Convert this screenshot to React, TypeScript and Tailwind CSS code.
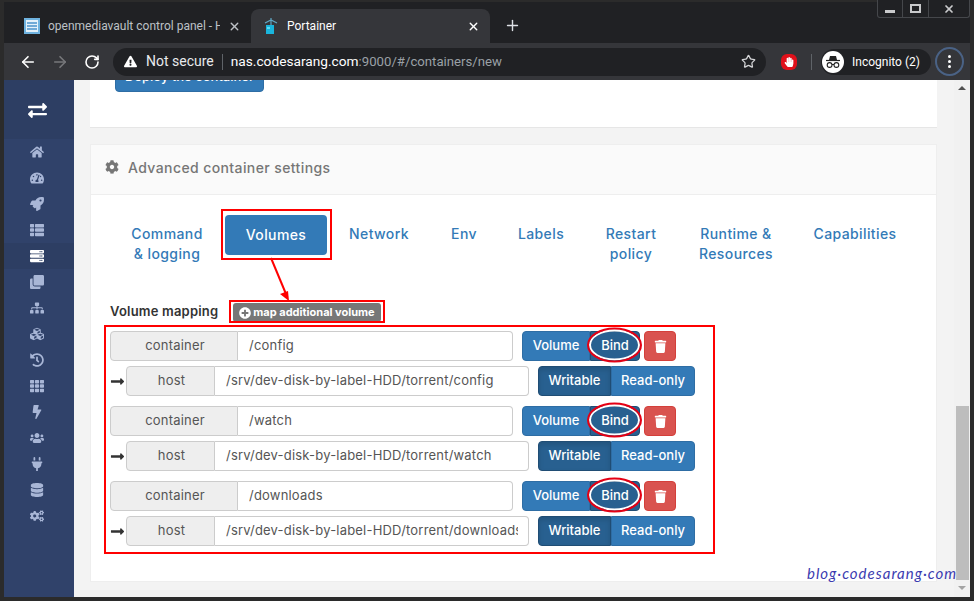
import { ArrowLeft, ArrowRight, Plus, RotateCw, Star, X } from "lucide-react";
import {
  FaBolt,
  FaClone,
  FaCog,
  FaCogs,
  FaCubes,
  FaDatabase,
  FaExchangeAlt,
  FaExclamationTriangle,
  FaHandPaper,
  FaHistory,
  FaHome,
  FaLongArrowAltRight,
  FaPlug,
  FaPlusCircle,
  FaRocket,
  FaServer,
  FaSitemap,
  FaTachometerAlt,
  FaTh,
  FaThList,
  FaTrash,
  FaUsers,
} from "react-icons/fa";

const NAV_ICONS = [
  FaHome,
  FaTachometerAlt,
  FaRocket,
  FaThList,
  FaServer,
  FaClone,
  FaSitemap,
  FaCubes,
  FaHistory,
  FaTh,
  FaBolt,
  FaUsers,
  FaPlug,
  FaDatabase,
  FaCogs,
];

const TABS = [
  { label: ["Command", "& logging"], width: "w-[116px]" },
  { label: ["Volumes"], width: "w-[102px]", active: true },
  { label: ["Network"], width: "w-[104px]" },
  { label: ["Env"], width: "w-[66px]" },
  { label: ["Labels"], width: "w-[88px]" },
  { label: ["Restart", "policy"], width: "w-[92px]" },
  { label: ["Runtime &", "Resources"], width: "w-[118px]" },
  { label: ["Capabilities"], width: "w-[120px]" },
];

const MAPPINGS = [
  { container: "/config", host: "/srv/dev-disk-by-label-HDD/torrent/config" },
  { container: "/watch", host: "/srv/dev-disk-by-label-HDD/torrent/watch" },
  { container: "/downloads", host: "/srv/dev-disk-by-label-HDD/torrent/downloads" },
];

function Addon({ label, width }: { label: string; width: string }) {
  return (
    <div className={`${width} h-full shrink-0 flex items-center justify-center pl-[2px] bg-[#eeeeee] border border-[#cccccc] rounded-l text-[#555555]`}>
      {label}
    </div>
  );
}

function TextValue({ value, width }: { value: string; width: string }) {
  return (
    <div className={`${width} h-full flex items-center overflow-hidden whitespace-nowrap bg-white border border-l-0 border-[#cccccc] rounded-r pl-[11px] pr-[10px] text-[#555555]`}>
      <span className="overflow-hidden">{value}</span>
    </div>
  );
}

function Mapping({ container, host }: { container: string; host: string }) {
  return (
    <div className="flex flex-col gap-[5px]">
      <div className="flex h-[30px]">
        <Addon label="container" width="w-[128px]" />
        <TextValue value={container} width="w-[275px]" />
        <div className="ml-[9px] flex h-full text-white font-medium tracking-normal">
          <div className="w-[68px] flex items-center justify-center bg-[#337ab7] border border-[#2e6da4] rounded-l">Volume</div>
          <div className="w-[50px] flex items-center justify-center bg-[#286090] border border-[#204d74] rounded-r">Bind</div>
        </div>
        <div className="ml-[4px] w-[32px] flex items-center justify-center bg-[#d9534f] border border-[#d43f3a] rounded text-white">
          <FaTrash className="text-[13px]" />
        </div>
      </div>
      <div className="flex h-[30px]">
        <div className="w-[16px] shrink-0 flex items-center">
          <FaLongArrowAltRight className="text-[15px] shrink-0 text-[#333333]" />
        </div>
        <Addon label="host" width="w-[89px]" />
        <TextValue value={host} width="w-[314px]" />
        <div className="ml-[9px] flex h-full text-white font-medium tracking-normal">
          <div className="w-[73px] flex items-center justify-center bg-[#286090] border border-[#204d74] rounded-l shadow-[inset_0_3px_5px_rgba(0,0,0,0.125)]">Writable</div>
          <div className="w-[84px] flex items-center justify-center bg-[#337ab7] border border-[#2e6da4] rounded-r">Read-only</div>
        </div>
      </div>
    </div>
  );
}

function Favicon() {
  return (
    <svg width="16" height="16" viewBox="0 0 16 16">
      <rect width="16" height="16" fill="#6fb3e0" />
      <rect x="2" y="2" width="12" height="12" fill="#e4f1fa" />
      <path d="M3 5h10M3 8h10M3 11h10" stroke="#4a93cc" strokeWidth="1.4" />
    </svg>
  );
}

function PortainerIcon() {
  return (
    <svg width="14" height="16" viewBox="0 0 14 16">
      <path d="M7 0v9M1 5l6-3 6 3" stroke="#5fa7c4" strokeWidth="1.2" fill="none" />
      <rect x="2" y="7" width="8" height="9" fill="#1ab5dd" />
      <rect x="3" y="9" width="3" height="2" fill="#5ddcf5" />
    </svg>
  );
}

function IncognitoIcon() {
  return (
    <svg width="16" height="14" viewBox="0 0 16 14" fill="none">
      <path d="M4 5 5 1h6l1 4z" fill="#222" />
      <path d="M1 5.5h14" stroke="#222" strokeWidth="1.2" />
      <circle cx="4.6" cy="10" r="2.4" stroke="#222" strokeWidth="1.1" />
      <circle cx="11.4" cy="10" r="2.4" stroke="#222" strokeWidth="1.1" />
      <path d="M7 9.5h2" stroke="#222" strokeWidth="1" />
    </svg>
  );
}

function Browser() {
  return (
    <div className="shrink-0 font-['Roboto',sans-serif]">
      <div className="h-[41px] bg-[#202124] flex items-end pl-[8px]">
        <div className="w-[239px] h-[34px] flex items-center pl-[12px] pr-[10px] text-[12px] text-[#bdc1c6]">
          <Favicon />
          <span className="ml-[8px] w-[172px] overflow-hidden whitespace-nowrap">openmediavault control panel - H</span>
          <X size={13} strokeWidth={2.5} className="ml-auto text-[#bdc1c6]" />
        </div>
        <div className="w-[239px] h-[34px] flex items-center pl-[13px] pr-[10px] bg-[#35363a] rounded-t-lg text-[12px] text-white">
          <PortainerIcon />
          <span className="ml-[9px]">Portainer</span>
          <X size={13} strokeWidth={2.5} className="ml-auto text-white" />
        </div>
        <Plus size={17} strokeWidth={2} className="ml-[14px] mb-[9px] text-[#dee1e6]" />
      </div>
      <div className="h-[37px] bg-[#35363a] flex items-center">
        <ArrowLeft size={18} strokeWidth={2.2} className="ml-[15px] text-white" />
        <ArrowRight size={18} strokeWidth={2.2} className="ml-[14px] text-[#77787b]" />
        <RotateCw size={16} strokeWidth={2.4} className="ml-[15px] text-white" />
        <div className="ml-[13px] w-[653px] h-[28px] bg-[#202124] rounded-full flex items-center pl-[11px] text-[14px]">
          <FaExclamationTriangle className="text-[13px] text-white" />
          <span className="ml-[9px] text-[#e8eaed]">Not secure</span>
          <span className="ml-[8px] mr-[8px] w-px h-[16px] bg-[#5f6368]" />
          <span className="text-[13.7px] text-white">nas.codesarang.com</span>
          <span className="text-[13.2px] text-[#9aa0a6]">:9000/#/containers/new</span>
          <Star size={15} strokeWidth={2} className="ml-auto mr-[10px] text-[#d5d6d8]" />
        </div>
        <div className="ml-[15px] w-[16px] h-[16px] flex items-center justify-center bg-[#e0101a] rounded-[6px]">
          <FaHandPaper className="text-[10px] text-white" />
        </div>
        <span className="ml-[14px] w-px h-[16px] bg-[#5f6368]" />
        <div className="ml-[9px] w-[110px] h-[26px] bg-[#202124] rounded-full flex items-center text-[12px] text-white">
          <div className="ml-[1px] w-[22px] h-[22px] rounded-full bg-white flex items-center justify-center">
            <IncognitoIcon />
          </div>
          <span className="ml-[8px]">Incognito (2)</span>
        </div>
        <div className="ml-[4px] w-[29px] h-[29px] rounded-full border-2 border-[#4a6285] flex flex-col items-center justify-center gap-[2px]">
          <span className="w-[3px] h-[3px] rounded-full bg-white" />
          <span className="w-[3px] h-[3px] rounded-full bg-white" />
          <span className="w-[3px] h-[3px] rounded-full bg-white" />
        </div>
      </div>
    </div>
  );
}

function Sidebar() {
  return (
    <aside className="w-[70px] shrink-0 bg-[#30426a] flex flex-col items-center">
      <div className="w-full h-[59px] shrink-0 bg-[#2d3e63] flex items-center justify-center pr-[4px] pt-[1px]">
        <FaExchangeAlt className="text-[19px] text-white" />
      </div>
      {NAV_ICONS.map((Icon, i) => (
        <div
          key={i}
          className={`w-full h-[26px] shrink-0 flex items-center justify-center pr-[4px] text-[14px] ${
            i === 4 ? "bg-[#2d3e63] text-white" : "text-[#a8b6d6]"
          }`}
        >
          <Icon />
        </div>
      ))}
    </aside>
  );
}

function ContainerSettings() {
  return (
    <section className="mt-[16px] h-[438px] bg-white border border-[#eeeeee] flex flex-col">
      <div className="h-[50px] shrink-0 bg-[#fafafa] border-b border-[#eeeeee] flex items-center pl-[14px] pb-[5px] text-[#767676] text-[14px]">
        <FaCog className="text-[14px]" />
        <span className="ml-[9px] font-medium tracking-[0.4px]">Advanced container settings</span>
      </div>
      <div className="mt-[20px] ml-[18px] flex items-start text-[14px] leading-[20px] text-[#337ab7] font-medium tracking-[0.4px]">
        {TABS.map((tab) => (
          <div
            key={tab.label[0]}
            className={`${tab.width} shrink-0 text-center ${
              tab.active ? "h-[40px] bg-[#337ab7] text-white rounded flex items-center justify-center" : "mt-[9px]"
            }`}
          >
            {tab.label.map((line) => (
              <div key={line}>{line}</div>
            ))}
          </div>
        ))}
      </div>
      <div className="mt-[39px] ml-[19px] flex items-start h-[20px]">
        <span className="w-[123px] text-[13px] leading-[16px] font-semibold tracking-[0.2px] text-[#333333]">Volume mapping</span>
        <div className="w-[148px] h-[19px] flex items-center justify-center gap-[2px] bg-[#777777] rounded-[3px] text-white text-[11px] font-bold">
          <FaPlusCircle className="text-[12px]" />
          <span>map additional volume</span>
        </div>
      </div>
      <div className="mt-[8px] ml-[19px] flex flex-col gap-[10px] text-[13px] tracking-[0.2px]">
        {MAPPINGS.map((m) => (
          <Mapping key={m.container} {...m} />
        ))}
      </div>
    </section>
  );
}

function Annotations() {
  return (
    <>
      <div className="absolute left-[221px] top-[209px] w-[111px] h-[51px] border-2 border-[#ff0000]" />
      <div className="absolute left-[229px] top-[300px] w-[156px] h-[23px] border-2 border-[#ff0000]" />
      <div className="absolute left-[104px] top-[325px] w-[611px] h-[229px] border-2 border-[#ff0000]" />
      <svg className="absolute left-0 top-0" width="974" height="601" fill="none">
        <path d="M271 258 286 294" stroke="#ff0000" strokeWidth="2" />
        <path d="M289 301 280 294 288 291z" fill="#ff0000" />
        {[345, 420, 495].map((cy) => (
          <g key={cy}>
            <ellipse cx="614.5" cy={cy} rx="24.5" ry="14.5" stroke="#ffffff" strokeWidth="2" />
            <ellipse cx="614.5" cy={cy} rx="26.5" ry="16.5" stroke="#e50014" strokeWidth="2" />
          </g>
        ))}
      </svg>
      <span className="absolute left-[807px] top-[562px] font-['Lato',sans-serif] italic text-[15px] tracking-[1px] text-[#3b3bb0] [text-shadow:0_0_3px_#ffffff]">
        blog·codesarang·com
      </span>
      <div className="absolute left-[877px] top-0 w-[93px] h-[18px] flex bg-[#202124] border border-t-0 border-[#45474b] rounded-b-[3px] text-[#c9cacc] divide-x divide-[#45474b]">
        <div className="w-[25px] flex items-end justify-center pb-[4px]">
          <span className="w-[10px] h-[3px] bg-[#c9cacc]" />
        </div>
        <div className="w-[26px] flex items-center justify-center">
          <span className="w-[11px] h-[9px] border-2 border-[#c9cacc]" />
        </div>
        <div className="flex-1 flex items-center justify-center">
          <X size={12} strokeWidth={3.5} />
        </div>
      </div>
    </>
  );
}

export default function App() {
  return (
    <div className="relative w-[974px] h-[601px] overflow-hidden bg-[#2b2b2b] pt-[2px] pl-[4px] pr-[4px] pb-[4px] font-['Inter',sans-serif]">
      <div className="h-full flex flex-col">
        <Browser />
        <div className="flex-1 min-h-0 flex bg-[#f3f3f3]">
          <Sidebar />
          <main className="w-[880px] shrink-0 pl-[16px] pr-[17px] overflow-hidden">
            <section className="h-[48px] bg-white border-b border-[#e6e6e6] pl-[25px] overflow-hidden">
              <div className="-mt-[18px] w-[149px] h-[30px] flex items-center justify-center bg-[#337ab7] border border-[#2e6da4] rounded text-white text-[13px] font-medium">
                Deploy the container
              </div>
            </section>
            <ContainerSettings />
          </main>
          <div className="w-[16px] shrink-0 flex flex-col items-center bg-[#f1f1f1]">
            <span className="mt-[6px] w-0 h-0 border-x-[4px] border-x-transparent border-b-[4px] border-b-[#505050]" />
            <div className="mt-[316px] w-[13px] h-[174px] bg-[#bdbdbd]" />
            <span className="mt-[6px] w-0 h-0 border-x-[4px] border-x-transparent border-t-[4px] border-t-[#a3a3a3]" />
          </div>
        </div>
      </div>
      <Annotations />
    </div>
  );
}
